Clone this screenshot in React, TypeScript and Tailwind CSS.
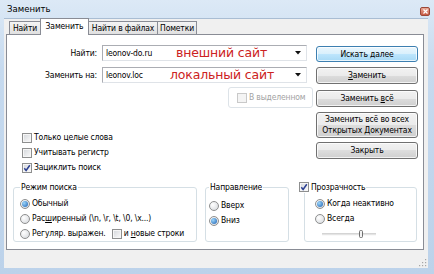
import type { ReactNode } from "react";

function Check({ checked = false, disabled = false }: { checked?: boolean; disabled?: boolean }) {
  return (
    <span
      className={
        disabled
          ? "flex h-[10px] w-[10px] shrink-0 items-center justify-center border border-[#c9c9c9] bg-[#f4f4f4]"
          : "flex h-[10px] w-[10px] shrink-0 items-center justify-center border border-[#8e8f8f] bg-[linear-gradient(135deg,#d3d6da,#fbfbfb)] shadow-[inset_0_0_0_1px_#f6f6f6]"
      }
    >
      {checked && (
        <svg width="8" height="8" viewBox="0 0 8 8">
          <path d="M1.3 4.2 L3.1 6.4 L6.8 1.2" fill="none" stroke="#2b3f91" strokeWidth="1.5" />
        </svg>
      )}
    </span>
  );
}

function Radio({ checked = false }: { checked?: boolean }) {
  return (
    <span className="flex h-[10px] w-[10px] shrink-0 items-center justify-center rounded-full border border-[#8e8f8f] bg-[radial-gradient(circle_at_35%_35%,#ffffff,#d3d6da)]">
      {checked && (
        <span className="h-[6px] w-[6px] rounded-full bg-[radial-gradient(circle_at_35%_35%,#9cd6fa,#1b5fb2)]" />
      )}
    </span>
  );
}

function Option({ children, checked, radio = true }: { children: ReactNode; checked?: boolean; radio?: boolean }) {
  return (
    <div className="flex h-[15px] items-center gap-[2px]">
      {radio ? <Radio checked={checked} /> : <Check checked={checked} />}
      <span>{children}</span>
    </div>
  );
}

function Btn({ children, primary = false, className = "" }: { children: ReactNode; primary?: boolean; className?: string }) {
  return (
    <div
      className={`flex w-[102px] items-center justify-center rounded-[3px] border text-center leading-[11px] shadow-[inset_0_0_0_1px_rgba(255,255,255,0.75)] ${
        primary
          ? "border-[#3c7fb1] bg-[linear-gradient(#eaf6fd_0%,#d9f0fc_50%,#bee6fd_50%,#a7d9f5_100%)]"
          : "border-[#707070] bg-[linear-gradient(#f2f2f2_0%,#ebebeb_50%,#dddddd_50%,#cfcfcf_100%)]"
      } ${className}`}
    >
      {children}
    </div>
  );
}

function Combo({ value, note, valueW }: { value: string; note: string; valueW: string }) {
  return (
    <div className="ml-[5px] flex h-[16px] w-[205px] items-center border border-[#abadb3] border-b-[#dfe3e8] border-r-[#dfe3e8] bg-white pl-[3px]">
      <span className={valueW}>{value}</span>
      <span className="font-['DejaVu_Sans',sans-serif] text-[12.5px] leading-[14px] text-[#cc2222]">{note}</span>
      <svg className="ml-auto mr-[5px]" width="6" height="4" viewBox="0 0 6 4">
        <path d="M0 0 H6 L3 3.5 Z" fill="#111" />
      </svg>
    </div>
  );
}

function Tab({ children, w, active = false }: { children: ReactNode; w: string; active?: boolean }) {
  return active ? (
    <div className={`relative z-10 -mb-px -ml-px flex h-[17px] items-start justify-center border border-b-0 border-[#898c95] bg-white pt-[2px] ${w}`}>
      {children}
    </div>
  ) : (
    <div className={`-ml-px flex h-[13px] items-center justify-center border border-b-0 border-[#898c95] bg-[linear-gradient(#f4f4f4,#e0e0e0)] ${w}`}>
      {children}
    </div>
  );
}

export default function App() {
  return (
    <div className="flex h-[274px] w-[434px] flex-col whitespace-nowrap bg-[linear-gradient(#dce9f6,#c6daef_25%,#bcd2ea)] font-['DejaVu_Sans_Condensed','Liberation_Sans',sans-serif] text-[8.5px] leading-[11px] tracking-[-0.15px] text-black">
      {/* title */}
      <div className="flex h-[18px] shrink-0 items-start justify-between pl-[7px] pr-[4px]">
        <span className="text-[9.5px] leading-[18px] tracking-normal">Заменить</span>
        <div className="mt-[7px] flex h-[9px] w-[10px] items-center justify-center rounded-[2px] border border-[#9a4838] bg-[linear-gradient(#e9a896,#c85b45)]">
          <svg width="5" height="5" viewBox="0 0 5 5">
            <path d="M0.5 0.5 L4.5 4.5 M4.5 0.5 L0.5 4.5" stroke="#fff" strokeWidth="1.2" />
          </svg>
        </div>
      </div>

      <div className="mb-[6px] ml-[4px] mr-[6px] flex flex-1 flex-col border-t border-[#a9bdd3] bg-[#f0f0f0]">
        {/* tabs */}
        <div className="flex h-[15px] shrink-0 items-end pl-[6px]">
          <Tab w="w-[32px]">Найти</Tab>
          <Tab w="w-[49px]" active>
            Заменить
          </Tab>
          <Tab w="w-[70px]">Найти в файлах</Tab>
          <Tab w="w-[40px]">Пометки</Tab>
        </div>

        {/* panel */}
        <div className="ml-[2px] mr-[4px] h-[216px] shrink-0 border border-[#898c95] bg-white">
          <div className="flex">
            <div className="flex w-[309px] flex-col pt-[10px]">
              <div className="flex items-center">
                <span className="w-[90px] text-right">Найти:</span>
                <Combo value="leonov-do.ru" note="внешний сайт" valueW="w-[70px]" />
              </div>
              <div className="mt-[6px] flex items-center">
                <span className="w-[90px] text-right">Заменить на:</span>
                <Combo value="leonov.loc" note="локальный сайт" valueW="w-[64px]" />
              </div>
              <div className="ml-[221px] mt-[4px] flex h-[21px] w-[85px] items-center rounded-[3px] border border-[#dde3e8] pl-[8px]">
                <div className="flex items-center gap-[2px] text-[#a3a3a3]">
                  <Check disabled />
                  <span>В выделенном</span>
                </div>
              </div>
              <div className="mt-[22px] flex flex-col pl-[15px]">
                <Option radio={false}>Только целые слова</Option>
                <Option radio={false}>Учитывать регистр</Option>
                <Option radio={false} checked>
                  Зациклить поиск
                </Option>
              </div>
            </div>

            <div className="flex flex-col pt-[10px]">
              <Btn primary className="mt-[1px] h-[16px]">
                Искать далее
              </Btn>
              <Btn className="mt-[5px] h-[17px]">
                <span>
                  <span className="underline">З</span>аменить
                </span>
              </Btn>
              <Btn className="mt-[6px] h-[17px]">
                <span>
                  Заменить <span className="underline">в</span>сё
                </span>
              </Btn>
              <Btn className="mt-[5px] h-[26px]">
                <span>
                  Заменить всё во всех
                  <br />
                  Открытых Документах
                </span>
              </Btn>
              <Btn className="mt-[4px] h-[17px]">Закрыть</Btn>
            </div>
          </div>

          {/* groups */}
          <div className="mt-[6px] flex">
            <fieldset className="ml-[6px] h-[61px] w-[184px] rounded-[3px] border border-[#d5dfe5] px-[6px]">
              <legend className="px-[1px] leading-[12px]">Режим поиска</legend>
              <div className="pt-[3px]">
                <Option checked>Обычный</Option>
                <Option>
                  Рас<span className="underline">ш</span>иренный (\n, \r, \t, \0, \x...)
                </Option>
                <div className="flex h-[15px] items-center">
                  <Radio />
                  <span className="ml-[2px]">Регуляр. выражен.</span>
                  <span className="ml-[6px]">
                    <Check />
                  </span>
                  <span className="ml-[2px]">
                    и <span className="underline">н</span>овые строки
                  </span>
                </div>
              </div>
            </fieldset>

            <fieldset className="ml-[8px] h-[61px] w-[84px] rounded-[3px] border border-[#d5dfe5] px-[3px]">
              <legend className="px-[1px] leading-[12px]">Направление</legend>
              <div className="pt-[5px]">
                <Option>Вверх</Option>
                <Option checked>Вниз</Option>
              </div>
            </fieldset>

            <fieldset className="ml-[15px] h-[61px] w-[113px] rounded-[3px] border border-[#d5dfe5] px-[10px]">
              <legend className="-ml-[16px] pr-[1px] leading-[12px]">
                <span className="flex h-[12px] items-center gap-[2px]">
                  <Check checked />
                  <span>Прозрачность</span>
                </span>
              </legend>
              <div className="pt-[3px]">
                <Option checked>Когда неактивно</Option>
                <Option>Всегда</Option>
                <div className="flex h-[15px] items-center pl-[7px]">
                  <svg width="54" height="10" viewBox="0 0 54 10">
                    <line x1="0" y1="5" x2="54" y2="5" stroke="#a8a8a8" strokeWidth="1" />
                    <line x1="0" y1="6" x2="54" y2="6" stroke="#f4f4f4" strokeWidth="1" />
                    <rect x="37.5" y="1.5" width="3" height="7" rx="1" fill="#f2f2f2" stroke="#6f6f6f" strokeWidth="1" />
                  </svg>
                </div>
              </div>
            </fieldset>
          </div>
        </div>

        {/* status strip */}
        <div className="flex flex-1 items-end justify-end pb-[1px] pr-[1px]">
          <svg width="8" height="8" viewBox="0 0 8 8">
            <rect x="6" y="0" width="1.2" height="1.2" fill="#a6a6a6" />
            <rect x="3" y="3" width="1.2" height="1.2" fill="#a6a6a6" />
            <rect x="6" y="3" width="1.2" height="1.2" fill="#a6a6a6" />
            <rect x="0" y="6" width="1.2" height="1.2" fill="#a6a6a6" />
            <rect x="3" y="6" width="1.2" height="1.2" fill="#a6a6a6" />
            <rect x="6" y="6" width="1.2" height="1.2" fill="#a6a6a6" />
          </svg>
        </div>
      </div>
    </div>
  );
}
